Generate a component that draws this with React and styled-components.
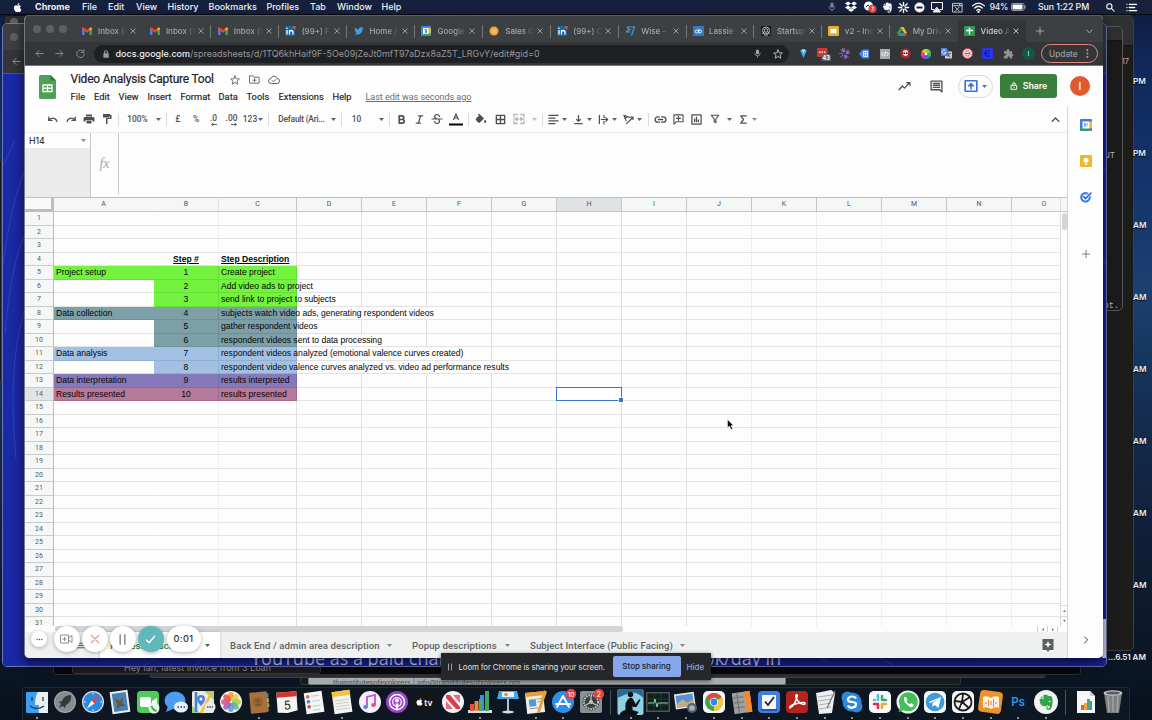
import React from "react";
import styled, { createGlobalStyle, css } from "styled-components";

const GlobalStyle = createGlobalStyle`
  * { box-sizing: border-box; }
  html, body { margin: 0; padding: 0; }
  body { width: 1152px; height: 720px; overflow: hidden; font-family: Roboto, "Liberation Sans", sans-serif; }
  svg { display: block; flex: none; overflow: visible; }
`;

/* ---------- desktop ---------- */
const Desktop = styled.div`
  position: relative; width: 1152px; height: 720px; overflow: hidden;
  background: linear-gradient(180deg, #101a3a 0, #10285a 60px, #15336b 180px, #1a4170 290px, #142c4f 420px, #101f37 540px, #0a1523 680px, #08101b 720px);
`;
const MenuBar = styled.header`
  position: relative; height: 15px; display: flex; align-items: center; padding-left: 12px;
  background: linear-gradient(90deg, #15203f, #18203a); color: #f2f3f7; border-bottom: 1px solid #05070d;
  font: 500 9px/14px Inter, sans-serif;
`;
const MenuWord = styled.span`
  width: ${p => p.$w}px; white-space: nowrap; font-weight: ${p => (p.$bold ? 700 : 500)}; margin-left: ${p => p.$ml || 0}px;
`;
const Spacer = styled.div`flex: 1;`;
const Slot = styled.div`
  flex: 0 0 ${p => p.$w}px; min-width: 0; display: flex; align-items: center; justify-content: center; white-space: nowrap;
`;
const Percent = styled(Slot)`font-size: 8.4px; letter-spacing: -.2px;`;
const Clock = styled(Slot)`font-size: 8.8px; letter-spacing: -.05px;`;
const Win = styled.section`
  position: absolute; left: ${p => p.$x}px; top: ${p => p.$y}px; width: ${p => p.$w}px; height: ${p => p.$h}px;
  background: ${p => p.$bg}; border: 1px solid ${p => p.$line || "#454545"}; border-radius: ${p => p.$r ?? 5}px; overflow: hidden;
`;
const WinHead = styled.div`height: ${p => p.$h}px; background: ${p => p.$bg}; border-bottom: 1px solid ${p => p.$line || "#222"};`;
const BackHead = styled(WinHead)`display: flex; align-items: center; padding-left: ${p => p.$pl ?? 6}px;`;
const Circle = styled.i`display: block; width: 8px; height: 8px; border-radius: 50%; background: #5d5f61; flex: none;`;
const BlueBody = styled.div`
  height: 593px; background: linear-gradient(90deg, #1a29a6, #17209a 60%, #1a249c); display: flex; position: relative;
  color: #d5dbf5; font: 18px/22px "Open Sans", sans-serif;
`;
const BlueCaption = styled.div`
  position: absolute; left: 248px; bottom: -2px; width: 530px; display: flex; justify-content: space-between; white-space: nowrap;
`;
const Arcs = styled.svg`position: absolute; left: 0; top: 0;`;
const PaleEdge = styled.div`position: absolute; right: 0; bottom: 9px; width: 4px; height: 39px; background: #d6d8dc;`;
const Note = styled.div`
  padding: ${p => p.$p}; color: ${p => p.$c}; font: ${p => p.$font}; white-space: nowrap; text-align: ${p => p.$align || "left"};
`;
const FileTimes = styled.div`
  position: absolute; left: 1133px; top: 75px; display: flex; flex-direction: column; gap: 60px;
  color: #e8ecf2; font: 600 8.2px/12px Inter, sans-serif; text-shadow: 0 1px 1px #000;
`;
const LastTime = styled.div`
  position: absolute; left: 1108px; top: 651px; color: #eceff3; font: 600 8.2px/12px Inter, sans-serif; text-shadow: 0 1px 1px #000; letter-spacing: -.15px;
`;

/* ---------- browser ---------- */
const Browser = styled.main`
  position: absolute; left: 24px; top: 15px; width: 1079px; height: 643px; display: flex; flex-direction: column;
  border-radius: 5px; overflow: hidden; background: #fdfdfd; border-left: 1px solid #777b83;
`;
const BrowserShadow = styled.div`
  position: absolute; left: 24px; top: 15px; width: 1079px; height: 643px; border-radius: 5px; box-shadow: 0 5px 12px rgba(0,0,0,.65);
`;
const TabStrip = styled.div`
  height: 27px; background: #3c4042; border-top: 1px solid #5b5e60; display: flex; align-items: center; padding-left: 7.5px; padding-top: 4px;
`;
const Lights = styled.div`display: flex; gap: 5px; width: 43px; align-self: center; padding-bottom: 4px;`;
const TabBox = styled.div`
  flex: 0 0 67.9px; height: 22px; display: flex; align-items: center; padding-left: 6px;
  border-radius: 5px 5px 0 0; background: ${p => (p.$on ? "#333538" : "transparent")};
  border-right: ${p => (p.$sep ? "1px solid transparent" : "0")};
  border-image: ${p => (p.$sep ? "linear-gradient(transparent 25%, #737678 25%, #737678 80%, transparent 80%) 1" : "none")};
`;
const TabTitle = styled.span`
  margin-left: 5.5px; width: 30px; overflow: hidden; white-space: nowrap; color: ${p => (p.$on ? "#cfd1d3" : "#a5a8aa")};
  font: 500 8px/12px Inter, sans-serif; mask-image: linear-gradient(90deg, #000 60%, transparent 98%);
`;
const TabClose = styled.span`margin-left: 2px;`;
const AddressRow = styled.div`
  height: 24px; background: #333538; border-bottom: 1px solid #73767a; display: flex; align-items: center; padding: 0 5px 0 4px;
`;
const Omnibox = styled.div`
  width: 695px; height: 18px; border-radius: 9px; background: #1f2023; color: #96999d; display: flex; align-items: center; padding-left: 8px;
  font: 400 8.98px/18px Inter, sans-serif; margin-right: 4px;
  b { color: #eceef0; font-weight: 500; }
  span { margin-left: 5.5px; flex: 1; white-space: nowrap; }
`;
const UpdatePill = styled.div`
  width: 57px; height: 19px; border: 1px solid #e2877d; border-radius: 10px; color: #9a9c9f; display: flex; align-items: center; justify-content: space-between;
  padding: 0 7px; font: 500 8.3px/16px Inter, sans-serif; margin-left: 2px;
`;

/* ---------- sheets header ---------- */
const DocHeader = styled.div`height: 41px; display: flex; padding-left: 14px; flex: none;`;
const LogoBox = styled.div`padding-top: 8.5px;`;
const DocText = styled.div`padding: 5px 0 0 14.5px; width: 828px; flex: none;`;
const TitleRow = styled.div`
  display: flex; align-items: center; height: 17px; font: 400 12px/17px Roboto, sans-serif; color: #202124;
  h1 { font: inherit; margin: 0; width: 155px; white-space: nowrap; -webkit-text-stroke: .2px #202124; letter-spacing: -.22px; }
`;
const Menus = styled.nav`
  display: flex; height: 18px; align-items: center; font: 400 9.3px/14px Roboto, sans-serif; color: #202124; -webkit-text-stroke: .15px #202124;
`;
const MenuItem = styled.span`width: ${p => p.$w}px; white-space: nowrap;`;
const LastEdit = styled.a`color: #6b6e72; text-decoration: underline; -webkit-text-stroke: 0; white-space: nowrap; font-size: 9px; letter-spacing: -.03px;`;
const HeadActions = styled.div`display: flex; align-items: center; padding-left: 6px; height: 40px;`;
const PresentPill = styled.div`
  width: 35px; height: 23px; border: 1px solid #d7d9dc; border-radius: 12px; display: flex; align-items: center; justify-content: center; gap: 4px; margin-left: 4px; flex: none;
`;
const ShareBtn = styled.button`
  margin-left: 7px; width: 57px; height: 24px; border: 0; border-radius: 3px; background: #3a7e3c; color: #fff; display: flex; align-items: center; justify-content: center; gap: 5px;
  font: 600 8.8px/12px Inter, sans-serif; padding: 0; flex: none;
`;
const Avatar = styled.div`
  margin-left: 13px; width: 20px; height: 20px; border-radius: 50%; background: #e05a2d; color: #fff; display: flex; align-items: center; justify-content: center;
  font: 500 10px Roboto, sans-serif; flex: none;
`;
const Workspace = styled.div`display: flex; flex: 1; min-height: 0;`;
const SheetPane = styled.div`width: 1042px; display: flex; flex-direction: column;`;
const SidePanel = styled.aside`
  width: 36px; border-left: 1px solid #d2d4d6; display: flex; flex-direction: column; align-items: center; padding-top: 12px;
`;
const SideItem = styled.div`height: 12px; margin-bottom: ${p => p.$mb}px; display: flex; align-items: center;`;

const ToolRow = styled.div`height: 26px; flex: none; display: flex; align-items: center; border-bottom: 1px solid #ececec; padding-bottom: 1px; color: #4d5053;`;
const Tool = styled.div`
  flex: 0 0 12px; min-width: 0; height: 14px; margin-left: ${p => p.$ml}px; display: flex; align-items: center; justify-content: center; white-space: nowrap;
  font: 500 8.4px/12px Roboto, sans-serif; ${p => p.$dim && css`opacity: .4;`} ${p => p.$tight && css`letter-spacing: -.22px;`}
`;
const Decimal = styled.div`display: flex; flex-direction: column; align-items: flex-end; height: 13px; line-height: 10px;`;
const Rule = styled.i`flex: 0 0 1px; height: 13px; background: #dadada; margin-left: ${p => p.$ml}px;`;
const FormulaRow = styled.div`height: 64px; flex: none; display: flex;`;
const NameBox = styled.div`
  width: 66px; border-right: 1px solid #c8c8c8; background: #ebebeb;
  div { background: #fdfdfd; height: 15px; display: flex; align-items: center; justify-content: space-between; padding: 0 4px; font: 400 8.8px/14px Inter, sans-serif; color: #111; }
`;
const FxBox = styled.div`
  width: 28px; height: 61px; border-right: 1px solid #c8c8c8; display: flex; align-items: center; justify-content: center; color: #a5a5a5; font: italic 14px "Liberation Serif", serif;
`;

/* ---------- grid ---------- */
const GridArea = styled.div`display: flex; height: 429px; flex: none; border-top: 1px solid #bdbfc1;`;
const Grid = styled.div`
  width: 1035px; height: 428px; overflow: hidden; display: grid; align-content: start;
  grid-template-columns: 29px 100px 65px 78px repeat(12, 65px); grid-template-rows: 14px repeat(31, 13.5px);
`;
const Corner = styled.div`border-right: 3px solid #bdbdbd; border-bottom: 3px solid #bdbdbd; background: #f8f9f9;`;
const ColHead = styled.div`
  background: ${p => (p.$on ? "#dfe3e6" : "#f5f7f7")}; border-right: 1px solid ${p => p.$line}; border-bottom: 1px solid #c4c6c6;
  font: 400 7px/13px Roboto, sans-serif; text-align: center; color: #505356;
`;
const RowHead = styled.div`
  background: ${p => (p.$on ? "#e1e4e7" : "#f6f8f8")}; border-right: 1px solid #bdbdbd; border-bottom: 1px solid #c9cbcb;
  font: 400 7px/13px Roboto, sans-serif; text-align: center; color: #55585b;
`;
const Cell = styled.div`
  position: relative; background: ${p => p.$bg || "transparent"}; min-width: 0;
  border-right: 1px solid ${p => p.$rb}; border-bottom: 1px solid ${p => (p.$bg ? "rgba(0,0,0,.09)" : "#e3e3e3")};
  font: 400 8.57px/13px "Liberation Sans", sans-serif; color: #050505; white-space: nowrap; text-align: ${p => p.$align || "left"};
  padding-left: ${p => (p.$align === "center" ? 0 : 2)}px;
  ${p => p.$head && css`font-weight: 700; text-decoration: underline; text-underline-offset: 1px; letter-spacing: .02px;`}
  ${p => p.$over && css`z-index: 2;`}
  ${p => p.$sel && css`margin: -1px 0 0 -1px; border: 1px solid #3b73cf; z-index: 3;
    &::after { content: ""; position: absolute; right: -2px; bottom: -2px; width: 4px; height: 4px; background: #3b73cf; box-shadow: 0 0 0 .7px #fff; }`}
`;
const VScroll = styled.div`width: 7px; border-left: 1px solid #dcdcdc; display: flex; flex-direction: column; align-items: center;`;
const VTop = styled.div`align-self: stretch; height: 14px; background: #f5f7f7; border-bottom: 1px solid #c4c6c6;`;
const VThumb = styled.div`width: 5px; height: 17px; border-radius: 3px; background: #d3d5d9; margin-top: 1px;`;
const VArrow = styled.div`align-self: stretch; height: 10.5px; border-top: 1px solid #d9d9d9; display: flex; align-items: center; justify-content: center;`;
const HScroll = styled.div`height: 6px; flex: none; display: flex; padding-left: 30px; background: #fdfdfd;`;
const HThumb = styled.div`width: 568px; height: 6px; border-radius: 3px; background: #d3d5d9;`;
const HArrow = styled.div`width: 10px; border-left: 1px solid #d0d0d0; display: flex; align-items: center; justify-content: center;`;
const SheetBar = styled.div`height: 26px; flex: none; background: #eff1f1; display: flex; align-items: center; font: 500 9.6px/26px Roboto, sans-serif; letter-spacing: .09px;`;
const SheetMenu = styled.div`width: 75px; padding-left: 51px;`;
const SheetTab = styled.div`
  width: ${p => p.$w}px; height: 26px; padding: 1px 10px 0; display: flex; align-items: center; justify-content: space-between; white-space: nowrap;
  background: ${p => (p.$on ? "#fff" : "transparent")}; color: ${p => (p.$on ? "#36783c" : "#5c5f62")};
  box-shadow: ${p => (p.$on ? "0 0 3px rgba(0,0,0,.2)" : "none")};
`;

/* ---------- overlays ---------- */
const LoomBar = styled.div`position: absolute; left: 31px; top: 626px; display: flex; align-items: center;`;
const LoomBtn = styled.div`
  width: ${p => p.$s}px; height: ${p => p.$s}px; border-radius: 50%; background: ${p => p.$bg || "#fff"}; margin-right: ${p => p.$mr}px;
  box-shadow: 0 1px 4px rgba(0,0,0,.3); display: flex; align-items: center; justify-content: center;
`;
const LoomTime = styled.div`
  width: 34px; height: 26px; border-radius: 13px; background: #fff; box-shadow: 0 1px 4px rgba(0,0,0,.3); text-align: center;
  font: 500 9.2px/26px Inter, sans-serif; letter-spacing: .4px; color: #333;
`;
const ShareBar = styled.div`
  position: absolute; left: 441px; top: 653px; width: 270px; height: 27px; background: #26272a; display: flex; align-items: center; padding-left: 6px;
  box-shadow: 0 1px 4px rgba(0,0,0,.6); color: #dfe1e5; font: 400 7.8px/14px Inter, sans-serif; white-space: nowrap;
`;
const ShareText = styled.span`flex: 0 0 154px; margin-left: 5.5px; letter-spacing: -.1px;`;
const StopBtn = styled.button`
  flex: 0 0 68px; height: 21px; border: 0; border-radius: 2px; background: #86a7ea; color: #1e2126; font: 500 8px/21px Inter, sans-serif; padding: 0;
`;
const HideLink = styled.a`color: #86a7ea; margin-left: 6px; font-weight: 500; font-size: 8px;`;
const Pointer = styled.svg`position: absolute; left: 727px; top: 419px;`;

/* ---------- dock ---------- */
const DockBar = styled.footer`
  position: absolute; left: 22px; top: 687px; width: 1108px; height: 34px; border: 1px solid #1f2a39; border-radius: 3px 3px 0 0; background: #0d1621;
  display: flex; padding: 2px 0 0 .5px;
`;
const DockSlot = styled.div`
  flex: 0 0 27.7px; display: flex; flex-direction: column; align-items: center; height: 30px;
  &::after { content: ""; width: 2px; height: 2px; border-radius: 50%; margin-top: 2.5px; background: ${p => (p.$run ? "#b5bcc6" : "transparent")}; }
`;
const DockRule = styled.i`width: 1px; height: 25px; background: #47525f; margin: 0 ${p => p.$mx}px; flex: none;`;

/* ---------- icons ---------- */
const I = ({ s = 12, vb = 24, c = "currentColor", children, f, sw = 2 }) => (
  <svg width={s} height={s} viewBox={`0 0 ${vb} ${vb}`} fill={f ? c : "none"} stroke={f ? "none" : c} strokeWidth={sw} strokeLinejoin="round" strokeLinecap="round">{children}</svg>
);
const Caret = ({ c = "#606366" }) => <svg width="5" height="3" viewBox="0 0 10 6"><path d="M0 0h10L5 6z" fill={c} /></svg>;
const Cross = ({ c = "#b5b8ba", s = 6, sw = 3.4 }) => <I s={s} c={c} sw={sw}><path d="M3 3l18 18M21 3L3 21" /></I>;
const Plus = ({ c, s }) => <I s={s} c={c} sw={2.6}><path d="M12 1v22M1 12h22" /></I>;
const Star = ({ c, s }) => <I s={s} c={c} sw={2.2}><path d="M12 2l3 7 7.500.7-5.700 5 1.800 7.300-6.600-4-6.600 4 1.800-7.300-5.700-5L9 9z" /></I>;
const Mic = ({ c, s }) => <I s={s} c={c} f><rect x="8" y="1" width="8" height="13" rx="4" /><path d="M4 10h2q0 7 6 7t6-7h2q0 8-7 9v4h-2v-4Q4 18 4 10z" /></I>;

const Gmail = () => (
  <svg width="10" height="8" viewBox="0 0 20 16">
    <path d="M0 3v11q0 2 2 2h3V6z" fill="#4285f4" /><path d="M20 3v11q0 2-2 2h-3V6z" fill="#34a853" />
    <path d="M0 2.500Q1-.5 4 1l6 5 6-5q3-1.500 4 1.500L20 4l-10 7.500L0 4z" fill="#ea4335" /><path d="M15 2.500l2-1.500q3 0 3 3l-5 4z" fill="#fbbc04" />
  </svg>
);
const LinkedIn = () => (
  <svg width="11" height="10" viewBox="0 0 22 20"><rect width="20" height="20" rx="2" fill="#1468a8" />
    <path d="M4 8v9M9 17V8M9 13q0-4 3.500-4t3.500 4v4" stroke="#fff" strokeWidth="2.600" fill="none" /><circle cx="4" cy="4.500" r="1.600" fill="#fff" /><circle cx="19" cy="3" r="3.500" fill="#d64539" /></svg>
);
const Twitter = () => <I s={10} f c="#3d9fe6"><path d="M23 5c-.8.4-1.700.6-2.600.7.9-.6 1.600-1.400 2-2.500-.9.5-1.900.9-2.900 1.100A4.600 4.600 0 0 0 11.700 8.500C7.900 8.300 4.500 6.500 2.300 3.800c-1.200 2-.6 4.800 1.400 6.100-.7 0-1.400-.2-2-.6 0 2.200 1.500 4.100 3.600 4.600-.7.2-1.400.2-2 .1.600 1.800 2.200 3.100 4.200 3.200A9.300 9.300 0 0 1 .6 19c9.500 5.400 20.200-1 20-11.600.9-.6 1.700-1.500 2.400-2.400z" /></I>;
const favs = {
  gmail: <Gmail />, li: <LinkedIn />, tw: <Twitter />,
  cal: <svg width="10" height="10" viewBox="0 0 20 20"><rect width="20" height="20" rx="2" fill="#4a83e6" /><path d="M15 4h5v11h-5z" fill="#f1b92f" /><path d="M3 16h13v4H3z" fill="#34a853" /><rect x="4" y="4" width="11" height="12" fill="#fff" /><path d="M7 7h4v3H8h3v4H7" stroke="#3c78dc" strokeWidth="1.800" fill="none" /></svg>,
  sales: <svg width="10" height="10" viewBox="0 0 20 20"><circle cx="10" cy="10" r="9" fill="#e9a63c" /><circle cx="10" cy="10" r="5" fill="#f4bc5c" /></svg>,
  wise: <svg width="9" height="10" viewBox="0 0 18 20"><path d="M2 2h15l-6 17M2 2l4 5-5 5h8M6 7h4" stroke="#3fa9dc" strokeWidth="2.200" fill="none" /></svg>,
  lassie: <svg width="11" height="10" viewBox="0 0 22 20"><rect width="22" height="20" rx="1" fill="#3179c4" /><circle cx="7.500" cy="11" r="3" stroke="#fff" strokeWidth="1.800" fill="none" /><circle cx="14" cy="11" r="3" stroke="#fff" strokeWidth="1.800" fill="none" /><path d="M11.500 5v8" stroke="#fff" strokeWidth="1.500" /></svg>,
  startup: <svg width="10" height="10" viewBox="0 0 20 20"><rect width="20" height="20" fill="#17181a" /><g stroke="#d9dadb" strokeWidth="1.700" fill="none"><circle cx="10" cy="9" r="7" /><circle cx="10" cy="9" r="3.500" /><path d="M2 17l4-5M18 17l-4-5M6 18h8" /></g></svg>,
  slides: <svg width="11" height="10" viewBox="0 0 22 20"><rect width="22" height="20" rx="2" fill="#e5ad33" /><rect x="5" y="5.500" width="12" height="9" fill="#fff" /></svg>,
  drive: <svg width="10" height="9" viewBox="0 0 20 18"><path d="M7 0L0 12l3.500 6L10.500 6z" fill="#2ba24c" /><path d="M7 0h6l7 12h-6z" fill="#f6b924" /><path d="M6.500 12H20l-3.500 6h-13z" fill="#3e7de6" /><path d="M14 12h6l-3.500 6z" fill="#e04a3c" /></svg>,
  sheets: <svg width="11" height="10" viewBox="0 0 22 20"><rect width="22" height="20" rx="1" fill="#2f9a57" /><path d="M11 3v14M4 9h14" stroke="#fff" strokeWidth="2.600" /></svg>,
};
const tabs = [["gmail", "Inbox (4"], ["gmail", "Inbox (1", 1], ["gmail", "Inbox (1", 1], ["li", "(99+) F", 1], ["tw", "Home /", 1], ["cal", "Google", 1], ["sales", "Sales C", 1], ["li", "(99+) C", 1], ["wise", "Wise -", 1], ["lassie", "Lassie", 1], ["startup", "Startup", 1], ["slides", "v2 - Inc", 1], ["drive", "My Driv"], ["sheets", "Video A"]];

const applePath = "M17.500 12.700c0-2.500 2-3.700 2.100-3.800-1.200-1.700-3-1.900-3.600-2-1.500-.1-3 .9-3.700.9-.8 0-2-.9-3.200-.9C7.400 7 5.900 7.900 5 9.300c-1.800 3-.5 7.500 1.200 10 .9 1.200 1.900 2.600 3.200 2.500 1.300 0 1.800-.8 3.400-.8s2 .8 3.400.8 2.300-1.200 3.100-2.400c1-1.400 1.400-2.800 1.400-2.900 0 0-3.200-1.100-3.200-3.800zM15 5.300c.7-.8 1.200-2 1-3.200-1 .1-2.200.7-2.900 1.500-.6.7-1.200 1.900-1 3 1.100.1 2.200-.5 2.900-1.300z";
const elephantPath = "M2.500 7.500h4.500q1 0 1-1V2q1.500-1.500 4-1 2 .3 2.500 1.500l5 .8q2 .7 2 7.700t-2.500 11q-2 2-4.500 1.500-2.500-.5-2.500-3t3-2.500v2h-1.500q-.3 1.700 1.500 1.700 2.500 0 2.500-4-2.500.3-3.500-1.700-1 2.500-5 2-5-1-6-5.500-.8-2-.5-5zM6.500 3v3.500H3zM17 10q-1.300 0-1.500 1.800 1.500-.5 3 .2 0-2-1.500-2z";
const menuIcons = [
  [19, <Mic s={10} c="#777d8d" />],
  [19, <I s={12} f c="#fff"><path d="M6 1l6 4-6 4-6-4zM18 1l6 4-6 4-6-4zM6 9l6 4-6 4-6-4zM18 9l6 4-6 4-6-4zM6 18l6-4 6 4-6 4z" /></I>],
  [19, <svg width="14" height="12" viewBox="0 0 28 24"><circle cx="11" cy="10" r="9" fill="#fff" /><path d="M6 12l4-4 3 3 4-3" stroke="#18203a" strokeWidth="2" fill="none" /><circle cx="19" cy="16" r="8" fill="#e4403f" /><path d="M17 12h4l-2 3q3 1 2 3t-4 1" stroke="#fff" strokeWidth="1.500" fill="none" /></svg>],
  [17, <I s={11} f c="#f4f5f8"><path d={elephantPath} /></I>],
  [15, <I s={11} c="#fff" sw={3}><path d="M12 1v7M12 16v7M1 12h7M16 12h7M4 4l5 5M15 15l5 5M20 4l-5 5M9 15l-5 5" /></I>],
  [16, <svg width="11" height="11" viewBox="0 0 22 22"><circle cx="11" cy="11" r="10" fill="#fff" /><path d="M5 11h12" stroke="#18203a" strokeWidth="4" /></svg>],
  [20, <I s={12} c="#fff"><path d="M6 17H1V3h22v14h-5" /><path d="M12 13l7 9H5z" fill="#fff" /></I>],
  [20, <I s={11} c="#cfd3dc"><path d="M2 3h20v19H2zM2 8h20M7 11l9 9M16 11l-9 9M17 4v4" /></I>],
  [22, <I s={13} c="#fff" sw={2.4}><path d="M1 9q11-10 22 0M5 13q7-6.500 14 0M9 17q3-3 6 0" /><circle cx="12" cy="20" r="1" fill="#fff" /></I>],
];

const exts = [
  <I s={9} f c="#49b4ee"><path d="M3 4l5-3h8l5 3-9 19z" /><path d="M8 1h8l-4 9z" fill="#d9f2ff" /></I>,
  <svg width="14" height="14" viewBox="0 0 28 28"><rect x="0" y="2" width="21" height="18" rx="2" fill="#c93a33" /><path d="M4 10h3M9 10h3M14 10h3" stroke="#fff" strokeWidth="2.500" /><rect x="9" y="15" width="19" height="13" rx="2" fill="#616467" /><text x="18.500" y="25.500" fontSize="11" fontWeight="700" fill="#fff" textAnchor="middle" fontFamily="Inter">43</text></svg>,
  <I s={11} c="#6b62d8" sw={2.6}><path d="M12 1v7M12 16v7M1 12h7M16 12h7M4 4l5 5M15 15l5 5M20 4l-5 5M9 15l-5 5" /><path d="M8 2l2 5M14 17l2 5M22 8l-5 2" stroke="#d07aa8" /></I>,
  <svg width="11" height="10" viewBox="0 0 22 20"><path d="M7 1h13v18H7L0 10z" fill="#4b8cea" /><path d="M9 5h8v10H9zM9 10h8M13 5v10" stroke="#fff" strokeWidth="1.600" fill="none" /></svg>,
  <svg width="10" height="10" viewBox="0 0 20 20"><rect width="20" height="20" fill="#a8abae" /><path d="M7 6l-4 4 4 4M13 6l4 4-4 4M11 5L9 15" stroke="#fff" strokeWidth="1.800" fill="none" /></svg>,
  <svg width="11" height="11" viewBox="0 0 22 22"><circle cx="11" cy="11" r="10.500" fill="#a32b2e" /><path d="M6 6q5-4 10 0v7q-5 7-10 0z" fill="#e9d6d2" /><path d="M7 9h3v3H7zM12 9h3v3h-3z" fill="#412" /></svg>,
  <svg width="10" height="10" viewBox="0 0 20 20"><circle cx="10" cy="10" r="10" fill="#f0c228" /><path d="M10 10V0a10 10 0 0 1 8.700 5z" fill="#8bd23a" /><path d="M10 10l8.700-5a10 10 0 0 1 0 10z" fill="#21b573" /><path d="M10 10l8.700 5A10 10 0 0 1 10 20z" fill="#3b69e6" /><path d="M10 10v10a10 10 0 0 1-8.700-5z" fill="#a93bd2" /><path d="M10 10l-8.700 5a10 10 0 0 1 0-10z" fill="#ed3f73" /><circle cx="10" cy="10" r="2.500" fill="#fff" /></svg>,
  <svg width="11" height="11" viewBox="0 0 22 22"><rect x="8" y="7" width="14" height="14" fill="#c8ccd4" /><path d="M0 0h12l4 16H0z" fill="#4e83df" /><path d="M9 5a4 4 0 1 0 1 4H7" stroke="#fff" strokeWidth="1.700" fill="none" /><path d="M13 11h7M16 11q0 5-3 7M14 13q2 4 5 5" stroke="#536" strokeWidth="1.300" fill="none" /></svg>,
  <svg width="11" height="11" viewBox="0 0 22 22"><circle cx="11" cy="11" r="10" fill="#f3dcdc" stroke="#c7393b" strokeWidth="2" /><circle cx="11" cy="11" r="5" fill="none" stroke="#c7393b" strokeWidth="2" strokeDasharray="3 1.500" /><path d="M7 11h8" stroke="#c7393b" strokeWidth="2" /></svg>,
  <svg width="11" height="11" viewBox="0 0 22 22"><rect width="22" height="22" rx="4" fill="#2a34ea" /><path d="M16 6H10q-4 0-4 5t4 5h6M7 11h8" stroke="#141b79" strokeWidth="2.400" fill="none" /></svg>,
  <I s={11} f c="#8f9295"><path d="M2 7h6V5a3 3 0 0 1 6 0v2h6v6h1a3 3 0 0 1 0 5h-1v5h-5v-2a2.500 2.500 0 0 0-5 0v2H2v-6h2a2.500 2.500 0 0 0 0-5H2z" /></I>,
  <svg width="13" height="13" viewBox="0 0 26 26"><circle cx="13" cy="13" r="13" fill="#12573f" /><path d="M13 8v10" stroke="#a3c0b5" strokeWidth="2" /></svg>,
];

const C = "#e0e0e0", F = "#eeeeee";
const colLine = ["transparent", F, C, C, C, C, C, C, C, F, F, F, F, F, C];
const letters = "ABCDEFGHIJKLMNO".split("");
const G = "#73f33e", T = "#7c9fa8", B = "#a2c0e1", P = "#8679ba", M = "#b5799a";
/* row: [A, B, C, fill, last column index covered by overflowing text] */
const data = {
  5: ["Project setup", "1", "Create project", G],
  6: ["", "2", "Add video ads to project", G, 3],
  7: ["", "3", "send link to project to subjects", G, 3],
  8: ["Data collection", "4", "subjects watch video ads, generating respondent videos", T, 5],
  9: ["", "5", "gather respondent videos", T, 3],
  10: ["", "6", "respondent videos sent to data processing", T, 4],
  11: ["Data analysis", "7", "respondent videos analyzed (emotional valence curves created)", B, 5],
  12: ["", "8", "respondent video valence curves analyzed vs. video ad performance results", B, 6],
  13: ["Data interpretation", "9", "results interpreted", P],
  14: ["Results presented", "10", "results presented", M],
};

function SheetGrid() {
  const out = [<Corner key="corner" />];
  letters.forEach((l, i) => out.push(<ColHead key={l} $on={l === "H"} $line={i === 0 ? "transparent" : i === 1 ? "#e3e3e3" : "#c6c8c8"}>{l}</ColHead>));
  for (let r = 1; r <= 31; r++) {
    out.push(<RowHead key={"h" + r} $on={r === 14}>{r}</RowHead>);
    const d = data[r];
    letters.forEach((l, i) => {
      const bg = d && (i === 1 || i === 2 || (i === 0 && d[0])) ? d[3] : null;
      const hidden = d && d[4] && i >= 3 && i < d[4];
      const rb = hidden ? "transparent" : bg ? (i === 0 ? "transparent" : "rgba(0,0,0,.1)") : colLine[i];
      const text = r === 4 ? ["", "Step #", "Step Description"][i] : d && i < 3 ? d[i] : null;
      out.push(<Cell key={l + r} $bg={bg} $rb={rb} $head={r === 4} $over={i === 2 && d} $align={i === 1 ? "center" : "left"} $sel={l === "H" && r === 14}>{text}</Cell>);
    });
  }
  return <Grid>{out}</Grid>;
}

function Toolbar() {
  return (
    <ToolRow>
      <Tool $ml={21}><I s={11} sw={3}><path d="M4 7v7h7" /><path d="M4.500 13q6-6 12-3 4 2 5 6" /></I></Tool>
      <Tool $ml={7}><I s={11} sw={3}><path d="M20 7v7h-7" /><path d="M19.500 13q-6-6-12-3-4 2-5 6" /></I></Tool>
      <Tool $ml={6}><I s={12} f><path d="M6 3h12v4H6zM4 8h16q3 0 3 3v6h-4v-3H5v3H1v-6q0-3 3-3zM7 15h10v6H7z" /></I></Tool>
      <Tool $ml={6}><I s={12} f><path d="M4 2h14v2h3v8h-8v10h-3V10h8V7h-1v2H4z" /></I></Tool>
      <Rule $ml={5} />
      <Tool $ml={12.5}>100%</Tool><Tool $ml={8.5}><Caret /></Tool><Rule $ml={2} />
      <Tool $ml={5}>£</Tool><Tool $ml={6}>%</Tool>
      <Tool $ml={5.5}><Decimal>.0<svg width="6" height="3" viewBox="0 0 12 6"><path d="M12 3H2M5 0L1 3l4 3" stroke="#4d5053" strokeWidth="1.800" fill="none" /></svg></Decimal></Tool>
      <Tool $ml={6}><Decimal>.00<svg width="6" height="3" viewBox="0 0 12 6"><path d="M0 3h10M7 0l4 3-4 3" stroke="#4d5053" strokeWidth="1.800" fill="none" /></svg></Decimal></Tool>
      <Tool $ml={6.5}>123</Tool><Tool $ml={-2}><Caret /></Tool><Rule $ml={2} />
      <Tool $ml={26.5} $tight>Default (Ari...</Tool><Tool $ml={19.5}><Caret /></Tool><Rule $ml={2} />
      <Tool $ml={8.5}>10</Tool><Tool $ml={12.5}><Caret /></Tool><Rule $ml={2} />
      <Tool $ml={5}><I s={11} sw={3.6}><path d="M7 4h6q4 0 4 4t-4 4H7zM7 12h7q4 0 4 4t-4 4H7z" /></I></Tool>
      <Tool $ml={6}><I s={11} sw={2.8}><path d="M10 4h9M5 20h9M14.500 4l-5 16" /></I></Tool>
      <Tool $ml={6}><I s={12} sw={2.4}><path d="M2 12h20M17 7q-1-4-5-4T7 7q0 3 4 4M7 17q1 4 5 4t5-4q0-2-1-3" /></I></Tool>
      <Tool $ml={7}><svg width="14" height="14" viewBox="0 0 28 28"><path d="M9 16l5-12 5 12M11 12h6" stroke="#4d5053" strokeWidth="2.400" fill="none" /><path d="M0 23h28v4H0z" fill="#000" /></svg></Tool>
      <Rule $ml={6} />
      <Tool $ml={6}><I s={12} f><path d="M8 1l10 10-8 8q-2 1-4 0l-4-5q-1-2 0-3l6-6-2-2zM20 13q5 6 0 7-4-1 0-7z" /></I></Tool>
      <Tool $ml={7}><I s={11} sw={3}><path d="M3 3h18v18H3zM12 3v18M3 12h18" /></I></Tool>
      <Tool $ml={7} $dim><I s={12} sw={2.6}><path d="M9 3H2v5M15 3h7v5M9 21H2v-5M15 21h7v-5M2 12h7M22 12h-7M7 9l3 3-3 3M17 9l-3 3 3 3" /></I></Tool>
      <Tool $ml={3} $dim><Caret /></Tool><Rule $ml={2} />
      <Tool $ml={4.5}><I s={11} sw={2.6}><path d="M2 3h20M2 9h13M2 15h20M2 21h13" /></I></Tool><Tool $ml={-1}><Caret /></Tool>
      <Tool $ml={2}><I s={11} sw={2.6}><path d="M4 21h16M12 3v13M8 12l4 4 4-4" /></I></Tool><Tool $ml={-1}><Caret /></Tool>
      <Tool $ml={2}><I s={11} sw={2.6}><path d="M3 3v18M13 3v5M13 16v5M7 12h14M17 8l4 4-4 4" /></I></Tool><Tool $ml={-1}><Caret /></Tool>
      <Tool $ml={2}><I s={11} sw={2.6}><path d="M2 3l5 12M2 3l12 4M4 9l6-3M8 21L22 7M16 7h6v5" /></I></Tool><Tool $ml={-1}><Caret /></Tool>
      <Rule $ml={2} />
      <Tool $ml={5.5}><I s={13} sw={2.4}><path d="M10 7H7a5 5 0 0 0 0 10h3M14 7h3a5 5 0 0 1 0 10h-3M8 12h8" /></I></Tool>
      <Tool $ml={6}><I s={11} sw={2.4}><path d="M2 2h20v15H7l-5 5zM12 5v9M7.500 9.500h9" /></I></Tool>
      <Tool $ml={6}><I s={11} sw={2.8}><path d="M2 2h20v20H2zM8 17v-6M12 17V7M16 17v-4" /></I></Tool>
      <Tool $ml={7}><I s={10} sw={2.8}><path d="M3 3h18l-7 9v9l-4-3v-6z" /></I></Tool><Tool $ml={2}><Caret /></Tool>
      <Tool $ml={2}><I s={11} sw={2.8}><path d="M18 4H6l6 8-6 8h12" /></I></Tool><Tool $ml={-1}><Caret c="#8a8d90" /></Tool>
      <Spacer />
      <Slot $w={24}><I s={9} c="#3c3f42" sw={3.2}><path d="M3 17l9-9 9 9" /></I></Slot>
    </ToolRow>
  );
}

/* ---------- dock artwork (24 unit boxes) ---------- */
const D = ({ children, s = 24 }) => <svg width={s} height={24} viewBox="0 0 24 24">{children}</svg>;
const sq = (fill, r = 5) => <rect x="1" y="1" width="22" height="22" rx={r} fill={fill} />;
const dot = (fill, r = 11) => <circle cx="12" cy="12" r={r} fill={fill} />;
const dockLeft = [
  [1, <D><rect x="1" y="2" width="22" height="21" rx="1" fill="#3d9df0" /><path d="M13 2h10v21H14q-1-5 0-8h-4q0-9 3-13z" fill="#e9eef5" /><path d="M7 7v4M18 7v4M5 16q7 5 14 0" stroke="#17324f" strokeWidth="1.200" fill="none" /></D>],
  [0, <D>{dot("#a4a9ad")}<circle cx="12" cy="12" r="10" fill="#868c91" /><path d="M18 5q-7 0-9 6l-3 1 2 2-2 4 4-2 2 2 1-3q6-3 5-10z" fill="#33383c" /></D>],
  [0, <D>{dot("#dfe6ed")}{dot("#2a88dd", 9.800)}<path d="M12 3v2M12 19v2M3 12h2M19 12h2" stroke="#fff" strokeWidth=".8" /><path d="M18.500 5l-5 8.500-3-3z" fill="#e9463d" /><path d="M5.500 19l5-8.500 3 3z" fill="#f4f6f8" /></D>],
  [0, <D><g transform="rotate(-8 12 12)"><rect x="3" y="1" width="18" height="22" fill="#e9ecef" /><rect x="5" y="3" width="14" height="18" fill="#477fb8" /><path d="M7 7l5 4 4-3-2 5 3 4-5-1-4 3 1-6z" fill="#70522f" /></g></D>],
  [0, <D>{sq("#4fcb5a", 4)}<rect x="4" y="7" width="11" height="10" rx="2" fill="#fff" /><path d="M16 11l5-3v8l-5-3z" fill="#fff" /><circle cx="18" cy="18" r="5.500" fill="#e9f6ea" /><path d="M15.500 16q1 4 5 5" stroke="#39ae48" strokeWidth="2" fill="none" /></D>],
  [0, <D><ellipse cx="11" cy="10.500" rx="10.500" ry="9" fill="#4c9df2" /><path d="M4 16l-2 6 7-3z" fill="#4c9df2" /><ellipse cx="17" cy="17" rx="7" ry="5.500" fill="#e7f1fc" /><path d="M13.500 17h1.500M16.500 17H18M19.500 17H21" stroke="#246" strokeWidth="1.500" /></D>],
  [0, <D>{sq("#ece9dd", 2)}<path d="M13 1h10v9z" fill="#9ed08b" /><path d="M1 16l8 7H1z" fill="#9ed08b" /><path d="M10 23L21 2" stroke="#f2bd3f" strokeWidth="2.500" /><path d="M5 2v20" stroke="#3d82db" strokeWidth="2.500" /><path d="M10 5a4 4 0 0 1 4 4q0 3-4 7-4-4-4-7a4 4 0 0 1 4-4z" fill="#4a82da" /><circle cx="10" cy="9" r="1.500" fill="#fff" /><circle cx="19" cy="17" r="5.500" fill="#e8eaec" /><path d="M16 17h6" stroke="#556" strokeWidth="1.400" strokeDasharray="1.500 .8" /></D>],
  [0, <D>{dot("#f4f3f0")}{["#f29a38", "#f1cf3c", "#a5cf4c", "#5dba82", "#5c9fd8", "#8a6cc4", "#d2579b", "#e8584b"].map((c, i) => <ellipse key={c} cx="12" cy="6.500" rx="2.900" ry="4.500" fill={c} opacity=".88" transform={`rotate(${i * 45} 12 12)`} />)}</D>],
  [1, <D><g transform="rotate(-5 12 12)"><path d="M3 2h17l1 2v18l-2 1H3z" fill="#a4713f" /><path d="M20 4h2v4h-2z" fill="#3f86b5" /><path d="M20 9h2v4h-2z" fill="#d9a33e" /><path d="M20 14h2v4h-2z" fill="#8a4" /><circle cx="11" cy="12" r="5" fill="#956434" /><circle cx="11" cy="10.500" r="1.800" fill="#7b5029" /><path d="M7.500 15.500q3.500-4 7 0" fill="#7b5029" /></g></D>],
  [0, <D><g transform="rotate(-4 12 12)"><path d="M2 2h20v19l-10 2-10-1z" fill="#f3f3f2" /><path d="M2 2h20v5H2z" fill="#d5342c" /><text x="12" y="19.500" textAnchor="middle" fontSize="12.500" fontFamily="Roboto" fill="#2c2c2c">5</text></g></D>],
  [0, <D><g transform="rotate(-8 12 12)"><rect x="3" y="2" width="18" height="21" fill="#f3f4f4" /><circle cx="6.500" cy="6" r="1.800" fill="#e3663c" /><circle cx="6.500" cy="11" r="1.800" fill="#3b82d5" /><circle cx="6.500" cy="16" r="1.800" fill="#d8443f" /><path d="M10 6h8M10 11h8M10 16h8M10 20h7" stroke="#c6c8ca" strokeWidth="1" /></g></D>],
  [1, <D><g transform="rotate(-8 12 12)"><rect x="3" y="1" width="18" height="22" fill="#f4f3ee" /><path d="M3 1h18v5H3z" fill="#efc53b" /><path d="M5 10h14M5 13h14M5 16h14M5 19h14" stroke="#c9c9c5" strokeWidth=".9" /></g></D>],
  [0, <D>{dot("#f3f2f8")}<path d="M9 17V7l8-2v10" stroke="#c44fd1" strokeWidth="1.800" fill="none" /><ellipse cx="7.500" cy="17" rx="2.300" ry="2" fill="#4e8df0" /><ellipse cx="15.500" cy="15" rx="2.300" ry="2" fill="#e0508c" /></D>],
  [0, <D>{dot("#9a44c8")}<circle cx="12" cy="12" r="7.500" stroke="#fff" strokeWidth="1.500" fill="none" /><circle cx="12" cy="12" r="4.300" stroke="#fff" strokeWidth="1.300" fill="none" /><circle cx="12" cy="10.500" r="2" fill="#fff" /><path d="M10.500 13.500h3l-.8 7h-1.400z" fill="#fff" /></D>],
  [0, <D>{dot("#161616")}<g transform="translate(2 7.500) scale(.37)"><path d={applePath} fill="#fff" /></g><text x="15.300" y="15.500" textAnchor="middle" fontSize="8.500" fontWeight="600" fontFamily="Inter" fill="#fff">tv</text></D>],
  [0, <D>{dot("#f4f3f4")}<path d="M5 5h4l10 12v2h-4L5 8z" fill="#dd3a4d" /><path d="M5 11l7 8H5zM19 5v8l-7-8z" fill="#e0707f" /></D>],
  [1, <D><path d="M0 20h24v3H0z" fill="#d9dcdf" /><path d="M2 14h4v7H2z" fill="#e8503e" /><path d="M6.500 11h4v10h-4z" fill="#f08b32" /><path d="M12 5h4v16h-4z" fill="#3d8de0" /><path d="M17 1h4v20h-4z" fill="#3fa66a" /><path d="M11 9h3v12h-3z" fill="#4caf50" /></D>],
  [0, <D><path d="M3 1h18l2 8H1z" fill="#43a6e8" /><path d="M6 2h12v5H6z" fill="#e9f2f8" /><circle cx="10" cy="4.500" r="1.800" fill="#e8843b" /><path d="M11 9h2v12h-2z" fill="#b9c0c6" /><ellipse cx="12" cy="22" rx="6" ry="1.500" fill="#d7dbde" /></D>],
  [1, <D><g transform="rotate(-6 12 12)"><rect x="2" y="2" width="18" height="21" fill="#f1eee6" /><path d="M2 2h18v4H2z" fill="#f09b30" /><path d="M5 9h7v7H5z" fill="#4e98de" /><path d="M13 9h5M13 12h5M5 18h12" stroke="#999" /><path d="M21 1l3 2-9 19-3 1 1-3z" fill="#e7a03a" /></g></D>],
  [1, <D>{dot("#2f8eea")}<path d="M12 6l6 11M12 6L6 17M5 14h14" stroke="#fff" strokeWidth="1.900" strokeLinecap="round" /><circle cx="20" cy="4" r="5.200" fill="#df453f" /><text x="20" y="6.500" textAnchor="middle" fontSize="6.500" fontFamily="Inter" fill="#fff">10</text></D>],
  [0, <D>{sq("#8d9092", 2)}<circle cx="12" cy="12" r="8.500" fill="#3c3f41" /><circle cx="12" cy="12" r="7" fill="none" stroke="#c2c5c7" strokeWidth="2" strokeDasharray="1.600 .9" /><circle cx="12" cy="12" r="2" fill="#c2c5c7" /><path d="M12 12V6M12 12l5 3M12 12l-5 3" stroke="#c2c5c7" strokeWidth="1.300" /><circle cx="20" cy="4" r="5.200" fill="#df453f" /><text x="20" y="6.500" textAnchor="middle" fontSize="7" fontFamily="Inter" fill="#fff">2</text></D>],
];
const dockMid = [
  [1, <D s={27}><rect x="-1" y="-1" width="26" height="26" rx="2" fill="#8fd0e6" /><path d="M-1 8V1q0-2 2-2h22q2 0 2 2v7q-8-7-14-5T-1 8z" fill="#2b6a93" /><circle cx="12" cy="4.500" r="2.700" fill="#0d1114" /><path d="M1 25q1-4 6-5-1-9 4-12 3-1 4 2l2 4 4-5 1 1-4 7-3 0-1-1v4l6 2-2 3z" fill="#0d1114" /></D>],
  [1, <D><rect x="0" y="2" width="24" height="20" fill="#4f5557" /><rect x="1.500" y="3.500" width="21" height="17" fill="#0d1f1b" /><path d="M1.500 9h21M1.500 15h21M8 3v17M15 3v17" stroke="#244a3d" strokeWidth=".7" /><path d="M2 13h6l1-4 2 8 1-4h10" stroke="#a7dcc0" strokeWidth=".9" fill="none" /></D>],
  [1, <D><g transform="rotate(-8 12 12)"><rect x="1" y="3" width="20" height="15" fill="#e5eaee" /><rect x="2.500" y="4.500" width="17" height="12" fill="#5a92cf" /><path d="M2.500 13l6-4 5 4 6-3v6.500h-17z" fill="#c5ab83" /></g><circle cx="18" cy="18" r="5" fill="#596069" /><circle cx="18" cy="18" r="2.800" fill="#a4b5c8" /></D>],
  [1, <D>{sq("#f6f6f6")}<circle cx="12" cy="12" r="9" fill="#3da454" /><path d="M12 12L4.200 7.500A9 9 0 0 1 19.800 7.500H12z" fill="#df4a3c" /><path d="M12 12l7.800-4.500A9 9 0 0 1 12 21z" fill="#f5c83a" /><circle cx="12" cy="12" r="4.300" fill="#fff" /><circle cx="12" cy="12" r="3.400" fill="#4481e6" /></D>],
  [1, <D><g transform="rotate(-8 12 12)"><rect x="3" y="2" width="18" height="21" rx="1" fill="#9da09f" /><path d="M15 2h6v21h-6z" fill="#ef8b38" /><path d="M4 7h10M4 12h10M4 17h10M8 3v19" stroke="#6d7071" strokeWidth="1.100" /></g></D>],
  [1, <D><rect x="1" y="1" width="22" height="22" rx="4" fill="#3f80e0" /><rect x="5" y="5" width="14" height="14" rx="1" fill="#f6f8fb" /><path d="M8 11.500l3 3.500 6-8" stroke="#232a35" strokeWidth="1.800" fill="none" /><path d="M4 20h16" stroke="#1f57ad" strokeWidth="2" /></D>],
  [1, <D>{sq("#b4231c", 4)}<path d="M5 18q5-3 7-11 1-3-1-2-1 2 2 6t7 3q1-3-8-.5T5 18z" stroke="#fff" strokeWidth="1.400" fill="none" /></D>],
  [1, <D><path d="M3 3l15-3 4 3-3 20-13 1z" fill="#eceeef" /><path d="M5 7l14-2M5 11l14-2M6 15l12-2M6 19l12-2" stroke="#a0a4a7" strokeWidth=".9" /><path d="M22 1l-8 17" stroke="#75797d" strokeWidth="1.300" /></D>],
  [1, <D><circle cx="12" cy="12" r="9.500" fill="#2f87d8" /><circle cx="7.500" cy="7.500" r="6" fill="#2f87d8" /><circle cx="16.500" cy="16.500" r="6" fill="#2f87d8" /><path d="M16 8.500q-1-2-4-2t-4 2.500 4 3 4 3-4 2.700-4-2.200" stroke="#fff" strokeWidth="2.200" fill="none" /></D>],
  [1, <D>{sq("#f8f8f8")}<g strokeWidth="2.500" strokeLinecap="round"><path d="M10 5v5M6 10h1" stroke="#4cc0e8" /><path d="M14 10V6M14 10h4" stroke="#35ae7c" /><path d="M14 14h4M14 14v4" stroke="#e5ad35" /><path d="M10 14v4M10 14H6" stroke="#d92f60" /></g></D>],
  [1, <D><circle cx="12" cy="12" r="11.500" fill="#eef4ef" /><circle cx="12.300" cy="11.700" r="9.500" fill="#45bd58" /><path d="M2.500 22l2-6 4 4z" fill="#45bd58" /><path d="M8.500 7q-2 3 2 7t6 3l1.500-2-3-2-1.500 1.200q-2-1-3-3L11.500 10 10 7z" fill="#fff" /></D>],
  [1, <D>{sq("#f4f7f9")}<circle cx="12" cy="12" r="9.300" fill="#3c9bd8" /><path d="M5.500 12L18 7l-2.500 11-4-3-2 2v-4l6-4-8 4z" fill="#fff" /></D>],
  [1, <D>{sq("#f5f5f5")}<circle cx="12" cy="12" r="8.500" fill="none" stroke="#1d1d1d" strokeWidth="1.800" /><path d="M12 4l-1 8-7-1M11 12l8-5M11 12l7 6M11 12l-3 7" stroke="#1d1d1d" strokeWidth="1.800" fill="none" /><circle cx="11.500" cy="12" r="2" fill="#1d1d1d" /></D>],
  [1, <D><g transform="rotate(8 12 12)"><rect x="0" y="1" width="23" height="22" rx="4" fill="#ec9330" /></g><path d="M4 7q4-2 8 1 4-3 8-1v11q-4-2-8 1-4-3-8-1z" fill="#fbf2e3" /><path d="M7 12v2M9.500 10v6M12 11v4M14.500 9v8M17 12v2" stroke="#e58b2b" strokeWidth="1.100" /></D>],
  [1, <D>{sq("#0a1a2c")}<text x="12" y="16" textAnchor="middle" fontSize="11.500" fontWeight="600" fontFamily="Inter" fill="#3a92d8">Ps</text></D>],
  [1, <D>{dot("#f1f3f1", 12)}<g transform="translate(4 4) scale(.68)"><path d={elephantPath} fill="#37a34a" /></g></D>],
];
const dockEnd = [
  [0, <D><path d="M3 1h13l5 5v17H3z" fill="#f6f6f6" /><path d="M16 1v5h5z" fill="#c9cbcd" /><path d="M7 15h3v5H7z" fill="#e55a3e" /><path d="M10 13h3v7h-3z" fill="#f0a23c" /><path d="M13 9h3v11h-3z" fill="#4caf50" /><path d="M16 11h2v9h-2z" fill="#3d8de0" /></D>],
  [0, <D><path d="M3 3h18l-3 20H6z" fill="#7d8184" /><path d="M7 6l1 16M12 6v16M17 6l-1 16" stroke="#a9adb0" strokeWidth="1.200" /><ellipse cx="12" cy="3" rx="9.500" ry="2.800" fill="#c4c7c9" /><ellipse cx="12" cy="3" rx="7" ry="1.600" fill="#5a5d60" /></D>],
];
const renderDock = list => list.map(([run, art], i) => <DockSlot key={i} $run={run}>{art}</DockSlot>);

export default function App() {
  return (
    <Desktop>
      <GlobalStyle />
      <MenuBar>
        <I s={11} f c="#fff"><path d={applePath} /></I>
        <MenuWord $w={47} $ml={12} $bold>Chrome</MenuWord>
        <MenuWord $w={26}>File</MenuWord><MenuWord $w={28}>Edit</MenuWord><MenuWord $w={31.5}>View</MenuWord>
        <MenuWord $w={41}>History</MenuWord><MenuWord $w={58}>Bookmarks</MenuWord><MenuWord $w={43.5}>Profiles</MenuWord>
        <MenuWord $w={27}>Tab</MenuWord><MenuWord $w={44.5}>Window</MenuWord><MenuWord $w={30}>Help</MenuWord>
        <Spacer />
        {menuIcons.map(([w, n], i) => <Slot key={i} $w={w}>{n}</Slot>)}
        <Percent $w={20}>94%</Percent>
        <Slot $w={18}><svg width="15" height="8" viewBox="0 0 30 16"><rect x="1" y="1" width="25" height="14" rx="3" fill="none" stroke="#b9bdc8" strokeWidth="1.600" /><rect x="3" y="3" width="20" height="10" rx="1" fill="#fff" /><path d="M28 5v6" stroke="#b9bdc8" strokeWidth="2" /></svg></Slot>
        <Clock $w={73}>Sun 1:22 PM</Clock>
        <Slot $w={21}><I s={9} c="#fff" sw={2.8}><circle cx="9" cy="9" r="7" /><path d="M14.500 14.500L22 22" /></I></Slot>
        <Slot $w={21}><I s={11} c="#fff" sw={2.8}><path d="M7 5h16M7 12h12M7 19h16M2 5h.1M2 12h.1M2 19h.1" /></I></Slot>
        <Slot $w={10} />
      </MenuBar>

      <Win $x={-20} $y={160} $w={22} $h={222} $bg="#17191d" $line="#3a3d42" $r={2} />
      <Win $x={800} $y={15} $w={334} $h={636} $bg="#1c1c1b" $line="#3c3e40">
        <WinHead $h={30} $bg="#2f3031" $line="#111" />
        <Note $p="10px 4px 0 0" $align="right" $c="#b9babb" $font="7.5px/12px Inter, sans-serif">17</Note>
      </Win>
      <Win $x={800} $y={26} $w={323} $h={285} $bg="#1b1b1a" $line="#555758">
        <WinHead $h={14} $bg="#2f3031" $line="#141414" />
        <Note $p="107px 7px 0 0" $align="right" $c="#b9babb" $font="8px/14px Inter, sans-serif">OUT</Note>
        <Note $p="138px 3px 0 0" $align="right" $c="#b9babb" $font='8.5px/12px "Liberation Mono", monospace'>nt.</Note>
      </Win>
      <Win $x={300} $y={640} $w={661} $h={45} $bg="#1a1b1d" $line="#333" $r={2} />
      <Win $x={308} $y={640} $w={478} $h={45} $bg="#a9aaab" $line="#777" $r={2}>
        <Note $p="37px 0 0 24px" $c="#4a4b4d" $font="7px/10px Inter, sans-serif">thainstitutesofexplorers | info@transtitutesofxplorers.org</Note>
      </Win>
      <Win $x={150} $y={620} $w={895} $h={58} $bg="#2d2c30" $line="#3d3c40" $r={2} />
      <Win $x={53} $y={600} $w={1028} $h={75} $bg="#08080a" $line="#2a2c33" $r={3} />
      <Win $x={72} $y={600} $w={249} $h={74} $bg="#1b1b1d" $line="#323336" $r={3}>
        <Note $p="60px 0 0 51px" $c="#8a8b8e" $font="9px/14px Inter, sans-serif">Hey Ian, latest invoice from 3 Loan</Note>
      </Win>
      <Win $x={3} $y={15} $w={200} $h={20} $bg="#2a2c2e" $line="#111">
        <BackHead $h={12} $bg="#2a2c2e" $line="#2a2c2e"><Circle /></BackHead>
      </Win>
      <Win $x={2} $y={23} $w={1105} $h={644} $bg="#1a249c" $line="#6e75b8">
        <BackHead $h={26} $bg="#3b3f41" $line="#3b3f41" $pl={7}><Circle /></BackHead>
        <BackHead $h={24} $bg="#333538" $line="#555a55" $pl={9}><I s={9} c="#999c9e" sw={2.4}><path d="M22 12H3M11 4l-8 8 8 8" /></I></BackHead>
        <BlueBody>
          <Arcs width="1104" height="593" viewBox="0 0 1104 593" fill="none" stroke="#4452c4" strokeOpacity=".55"><path d="M0 92L12 66M0 190Q8 130 22 95M2 260Q8 190 22 160M13 385Q4 290 22 235M1098 90l6 10M1098 180l6 12M140 592l25-14M190 592l20-14M800 575l26 14M860 575l30 16" /></Arcs>
          <PaleEdge />
          <BlueCaption><span>YouTube as a paid channel</span><span>ok/day in</span></BlueCaption>
        </BlueBody>
      </Win>
      <FileTimes>{["PM", "PM", "AM", "AM", "AM", "AM", "AM", "AM"].map((t, i) => <span key={i}>{t}</span>)}</FileTimes>
      <LastTime>...6.51 AM</LastTime>

      <BrowserShadow />
      <Browser>
        <TabStrip>
          <Lights><Circle /><Circle /><Circle /></Lights>
          {tabs.map(([f, t, sep], i) => (
            <TabBox key={i} $sep={sep && i < 12} $on={i === 13}>
              <Slot $w={11}>{favs[f]}</Slot><TabTitle $on={i === 13}>{t}</TabTitle><TabClose><Cross c={i === 13 ? "#d9dadb" : "#a9acae"} /></TabClose>
            </TabBox>
          ))}
          <Slot $w={28}><Plus s={8} c="#b5b8ba" /></Slot>
          <Spacer />
          <Slot $w={28}><I s={7} c="#b5b8ba" sw={3}><path d="M3 7l9 10 9-10" /></I></Slot>
        </TabStrip>
        <AddressRow>
          <Slot $w={20}><I s={9} c="#8f9294" sw={2.4}><path d="M22 12H3M11 4l-8 8 8 8" /></I></Slot>
          <Slot $w={21}><I s={9} c="#8f9294" sw={2.4}><path d="M2 12h19M13 4l8 8-8 8" /></I></Slot>
          <Slot $w={21}><I s={9} c="#8f9294" sw={2.6}><path d="M20 7a10 10 0 1 0 2 6M21 2v7h-7" /></I></Slot>
          <Slot $w={3} />
          <Omnibox>
            <I s={8} f c="#9a9da0"><path d="M4 10h2V7q0-6 6-6t6 6v3h2v13H4zm5 0h6V7q0-3-3-3T9 7z" /></I>
            <span><b>docs.google.com</b>/spreadsheets/d/1TQ6khHaif9F-5Oe09jZeJt0mfT97aDzx8aZ5T_LRGvY/edit#gid=0</span>
            <Slot $w={20}><Mic s={9} c="#a6a9ab" /></Slot>
            <Slot $w={22}><Star s={10} c="#c0c3c5" /></Slot>
          </Omnibox>
          {exts.map((n, i) => <Slot key={i} $w={20.5}>{n}</Slot>)}
          <UpdatePill>Update<I s={9} f c="#e2877d"><circle cx="17" cy="3" r="2.700" /><circle cx="17" cy="12" r="2.700" /><circle cx="17" cy="21" r="2.700" /></I></UpdatePill>
        </AddressRow>

        <DocHeader>
          <LogoBox>
            <svg width="17" height="24" viewBox="0 0 34 48"><path d="M3 0h20l11 11v34q0 3-3 3H3q-3 0-3-3V3q0-3 3-3z" fill="#4fa058" /><path d="M23 0l11 11H23z" fill="#347a3f" /><path d="M8 20h18v13H8zM17 20v13M8 26.500h18" stroke="#fff" strokeWidth="2.600" fill="none" /></svg>
          </LogoBox>
          <DocText>
            <TitleRow>
              <h1>Video Analysis Capture Tool</h1>
              <Slot $w={19}><Star s={10} c="#5f6368" /></Slot>
              <Slot $w={19}><I s={11} c="#5f6368"><path d="M2 4h7l2 3h11v13H2zM12 10v7M8.500 13.500h7" /></I></Slot>
              <Slot $w={21}><I s={12} c="#5f6368"><path d="M6 19q-5 0-5-5t5-5q2-5 6-5t6 5q5 0 5 5t-4 5zM8.500 13l2.500 2.500 4.500-4.500" /></I></Slot>
            </TitleRow>
            <Menus>
              <MenuItem $w={23.5}>File</MenuItem><MenuItem $w={24.5}>Edit</MenuItem><MenuItem $w={29}>View</MenuItem><MenuItem $w={33}>Insert</MenuItem><MenuItem $w={38}>Format</MenuItem>
              <MenuItem $w={28}>Data</MenuItem><MenuItem $w={32}>Tools</MenuItem><MenuItem $w={54}>Extensions</MenuItem><MenuItem $w={33}>Help</MenuItem>
              <LastEdit>Last edit was seconds ago</LastEdit>
            </Menus>
          </DocText>
          <HeadActions>
            <Slot $w={28}><I s={13} c="#4d5053" sw={2.4}><path d="M2 18l6-7 4 4 9-10M16 5h6v5" /></I></Slot>
            <Slot $w={36}><I s={13} c="#4d5053" sw={2.4}><path d="M2 2h20v20l-4-4H2zM6 6.500h12M6 10h12M6 13.500h12" /></I></Slot>
            <PresentPill>
              <I s={14} c="#3b74d8" sw={2.8}><path d="M2 3h20v18H2zM12 17V9M8 12l4-4 4 4" /></I><Caret c="#3b74d8" />
            </PresentPill>
            <ShareBtn><I s={8} c="#fff" sw={2.8}><path d="M4 10h16v12H4zM8 10V6q0-4 4-4t4 4v4M12 15v2" /></I>Share</ShareBtn>
            <Avatar>I</Avatar>
          </HeadActions>
        </DocHeader>
        <Workspace>
          <SheetPane>
            <Toolbar />
            <FormulaRow>
              <NameBox><div>H14<Caret c="#8a8d90" /></div></NameBox>
              <FxBox>fx</FxBox>
            </FormulaRow>
            <GridArea>
              <SheetGrid />
              <VScroll>
                <VTop /><VThumb /><Spacer />
                <VArrow><svg width="3" height="2" viewBox="0 0 6 4"><path d="M0 4h6L3 0z" fill="#777" /></svg></VArrow>
                <VArrow><svg width="3" height="2" viewBox="0 0 6 4"><path d="M0 0h6L3 4z" fill="#777" /></svg></VArrow>
              </VScroll>
            </GridArea>
            <HScroll>
              <HThumb /><Spacer />
              <HArrow><svg width="2" height="3" viewBox="0 0 4 6"><path d="M4 0v6L0 3z" fill="#777" /></svg></HArrow>
              <HArrow><svg width="2" height="3" viewBox="0 0 4 6"><path d="M0 0v6l4-3z" fill="#777" /></svg></HArrow>
              <HArrow />
            </HScroll>
            <SheetBar>
              <SheetMenu><I s={9} c="#5f6368" sw={3}><path d="M2 6h20M2 12h20M2 18h20" /></I></SheetMenu>
              <SheetTab $on $w={120}>Process description<Caret c="#36783c" /></SheetTab>
              <SheetTab $w={182}>Back End / admin area description<Caret c="#808386" /></SheetTab>
              <SheetTab $w={118}>Popup descriptions<Caret c="#808386" /></SheetTab>
              <SheetTab $w={175}>Subject Interface (Public Facing)<Caret c="#808386" /></SheetTab>
              <Spacer />
              <Slot $w={38}><svg width="12" height="13" viewBox="0 0 24 26"><path d="M1 0h22v22h-8l-3 4-3-4H1z" fill="#5d6063" /><path d="M12 4l2 5 5 2-5 2-2 5-2-5-5-2 5-2z" fill="#fff" /></svg></Slot>
            </SheetBar>
          </SheetPane>
          <SidePanel>
            <SideItem $mb={24}><svg width="12" height="12" viewBox="0 0 24 24"><rect width="24" height="24" rx="2" fill="#3e7ce4" /><path d="M19 5h5v14h-5z" fill="#f2bb30" /><path d="M0 19h19v5H2q-2 0-2-2z" fill="#33a151" /><path d="M19 19h5l-5 5z" fill="#df4a3c" /><rect x="5" y="5" width="14" height="14" fill="#fff" /><path d="M7.500 8.500h3v6h-3M8 11.500h2.500M14 8v7" stroke="#3e7ce4" strokeWidth="1.500" fill="none" /></svg></SideItem>
            <SideItem $mb={24}><svg width="12" height="12" viewBox="0 0 24 24"><rect width="24" height="24" rx="2" fill="#edb92e" /><circle cx="12" cy="10.500" r="5" fill="#fff" /><path d="M9.500 17h5v2.500h-5z" fill="#fff" /></svg></SideItem>
            <SideItem $mb={45}><svg width="12" height="12" viewBox="0 0 24 24"><circle cx="11" cy="12.500" r="8.500" stroke="#3f7de2" strokeWidth="4.500" fill="none" /><path d="M7 11l4 4L22 4" stroke="#fff" strokeWidth="6" fill="none" /><path d="M7 11l4 4L22 4" stroke="#2f63c4" strokeWidth="3.200" fill="none" strokeLinecap="round" /></svg></SideItem>
            <SideItem $mb={0}><Plus s={8} c="#6a6d70" /></SideItem>
            <Spacer />
            <SideItem $mb={12}><I s={8} c="#3c3f42" sw={3}><path d="M8 3l9 9-9 9" /></I></SideItem>
          </SidePanel>
        </Workspace>
      </Browser>

      <Pointer width="7" height="11" viewBox="0 0 14 22"><path d="M1 1v16l4-3 3 7 3-1-3-7h5z" fill="#000" stroke="#fff" strokeWidth="1" /></Pointer>

      <LoomBar>
        <LoomBtn $s={16} $mr={6.5}><I s={7} c="#444" f><circle cx="4" cy="12" r="2.300" /><circle cx="12" cy="12" r="2.300" /><circle cx="20" cy="12" r="2.300" /></I></LoomBtn>
        <LoomBtn $s={26} $mr={2}><svg width="13" height="10" viewBox="0 0 26 20" fill="none" stroke="#7d8186" strokeWidth="1.800"><path d="M1 2h16v16H1zM17 8l7-5v14l-7-5M9 6v8M5 10h8" /></svg></LoomBtn>
        <LoomBtn $s={26} $mr={2}><Cross s={10} c="#e39a8f" sw={2.8} /></LoomBtn>
        <LoomBtn $s={26} $mr={2}><I s={11} c="#8a9199" sw={3.5}><path d="M7 2v20M17 2v20" /></I></LoomBtn>
        <LoomBtn $s={26} $mr={3} $bg="#5fb8b9"><I s={11} c="#fff" sw={2.8}><path d="M3 13l6 6L21 5" /></I></LoomBtn>
        <LoomTime>0:01</LoomTime>
      </LoomBar>

      <ShareBar>
        <I s={6} c="#c9cbce" sw={3}><path d="M6 0v24M18 0v24" /></I>
        <ShareText>Loom for Chrome is sharing your screen.</ShareText>
        <StopBtn>Stop sharing</StopBtn><HideLink>Hide</HideLink>
      </ShareBar>

      <DockBar>
        {renderDock(dockLeft)}<DockRule $mx={5.5} />{renderDock(dockMid)}<DockRule $mx={5.5} />{renderDock(dockEnd)}
      </DockBar>
    </Desktop>
  );
}
